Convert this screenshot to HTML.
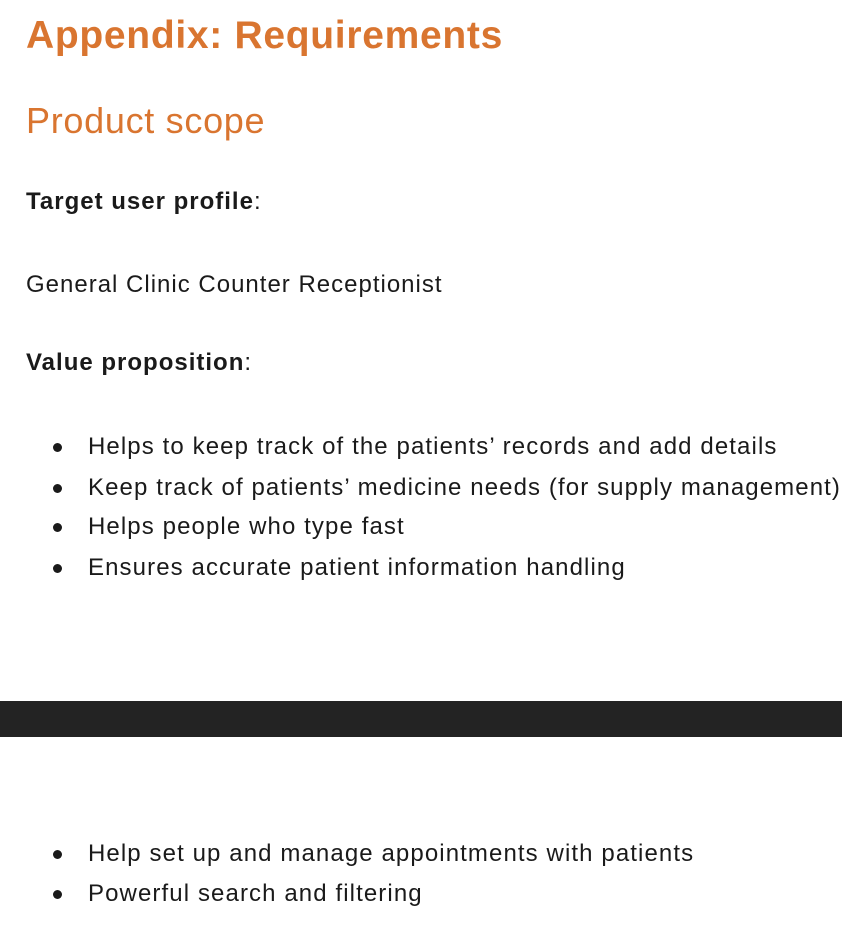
<!DOCTYPE html>
<html><head><meta charset="utf-8"><style>
body{margin:0;width:842px;height:950px;background:#fff;position:relative;overflow:hidden;font-family:"Liberation Sans",Arial,sans-serif;color:#1a1a1a}
.t{position:absolute;left:26px;white-space:nowrap;line-height:1}
.h1{font-size:39px;font-weight:bold;color:#d97530;top:16px;letter-spacing:0.7px}
.h2{font-size:36px;color:#d97530;top:103px;letter-spacing:0.7px}
.b{font-size:24px;letter-spacing:1px}
.li{position:absolute;left:88px;font-size:24px;white-space:nowrap;line-height:1;letter-spacing:1.1px}
.dot{position:absolute;left:53px;width:9px;height:9px;border-radius:50%;background:#1a1a1a}
.band{position:absolute;left:0;top:701px;width:842px;height:36px;background:#232323}
</style></head><body>
<div class="t h1">Appendix: Requirements</div>
<div class="t h2">Product scope</div>
<div class="t b" style="top:190px"><b>Target user profile</b>:</div>
<div class="t b" style="top:273px">General Clinic Counter Receptionist</div>
<div class="t b" style="top:351px"><b>Value proposition</b>:</div>
<div class="dot" style="top:443px"></div><div class="li" style="top:435px">Helps to keep track of the patients’ records and add details</div>
<div class="dot" style="top:484px"></div><div class="li" style="top:476px">Keep track of patients’ medicine needs (for supply management)</div>
<div class="dot" style="top:523px"></div><div class="li" style="top:515px">Helps people who type fast</div>
<div class="dot" style="top:564px"></div><div class="li" style="top:556px">Ensures accurate patient information handling</div>
<div class="band"></div>
<div class="dot" style="top:850px"></div><div class="li" style="top:842px">Help set up and manage appointments with patients</div>
<div class="dot" style="top:890px"></div><div class="li" style="top:882px">Powerful search and filtering</div>
</body></html>
